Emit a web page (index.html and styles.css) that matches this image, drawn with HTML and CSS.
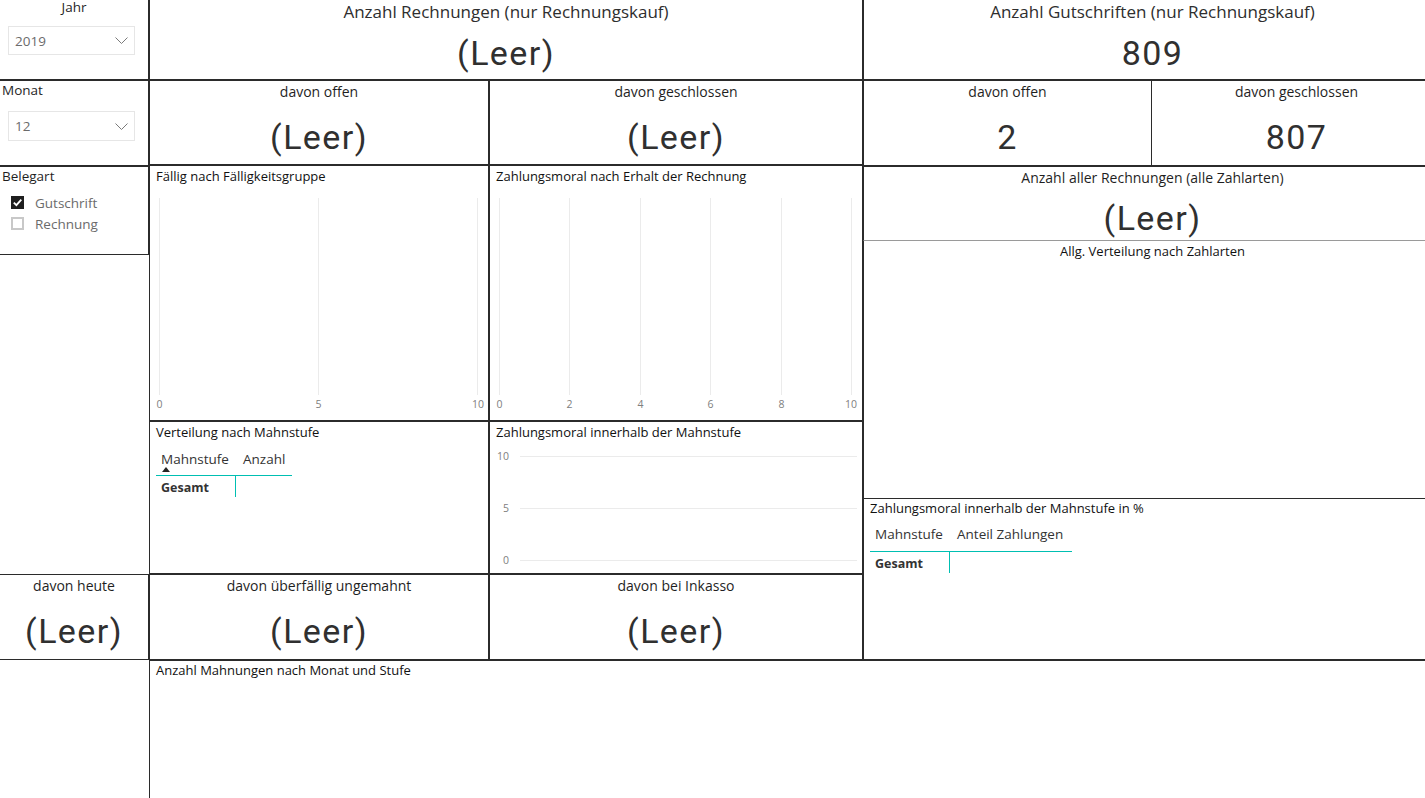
FILE: index.html
```html
<!DOCTYPE html>
<html lang="de">
<head>
<meta charset="utf-8">
<title>Bericht</title>
<link rel="stylesheet" href="styles.css">
</head>
<body>
<div class="report">
  <div class="col-left">
    <div class="slicer slicer-jahr">
      <div class="slicer-head slicer-head-center">Jahr</div>
      <div class="dropdown dropdown-jahr">
        <span>2019</span>
        <svg class="chevron" width="13" height="7" viewBox="0 0 13 7"><polyline points="0.5,0.5 6.5,6.5 12.5,0.5" fill="none" stroke="#7a7a7a" stroke-width="1"/></svg>
      </div>
    </div>
    <div class="slicer slicer-monat">
      <div class="slicer-head">Monat</div>
      <div class="dropdown dropdown-monat">
        <span>12</span>
        <svg class="chevron" width="13" height="7" viewBox="0 0 13 7"><polyline points="0.5,0.5 6.5,6.5 12.5,0.5" fill="none" stroke="#7a7a7a" stroke-width="1"/></svg>
      </div>
    </div>
    <div class="slicer slicer-beleg">
      <div class="slicer-head">Belegart</div>
      <div class="check-list">
        <div class="check-item">
          <svg class="checkbox" width="13" height="13" viewBox="0 0 13 13"><rect x="0" y="0" width="13" height="13" fill="#1f1f1f"/><polyline points="2.8,6.6 5.4,9.2 10.3,3.6" fill="none" stroke="#fff" stroke-width="1.8"/></svg>
          <span>Gutschrift</span>
        </div>
        <div class="check-item">
          <svg class="checkbox" width="13" height="13" viewBox="0 0 13 13"><rect x="1" y="1" width="11" height="11" fill="#fff" stroke="#c8c8c8" stroke-width="2"/></svg>
          <span>Rechnung</span>
        </div>
      </div>
    </div>
    <div class="left-spacer"></div>
    <div class="card card-left">
      <div class="card-title">davon heute</div>
      <div class="card-value">(Leer)</div>
    </div>
  </div>

  <div class="col-mid">
    <div class="card card-top mid-top">
      <div class="card-title card-title-big">Anzahl Rechnungen (nur Rechnungskauf)</div>
      <div class="card-value card-value-top">(Leer)</div>
    </div>
    <div class="card box">
      <div class="card-title">davon offen</div>
      <div class="card-value">(Leer)</div>
    </div>
    <div class="card box">
      <div class="card-title">davon geschlossen</div>
      <div class="card-value">(Leer)</div>
    </div>
    <div class="viz box">
      <div class="viz-title">Fällig nach Fälligkeitsgruppe</div>
      <svg class="plot" width="337" height="234" viewBox="0 0 337 234">
        <g stroke="#ebebeb" stroke-width="1">
          <line x1="9.5" y1="12" x2="9.5" y2="209"/>
          <line x1="168.5" y1="12" x2="168.5" y2="209"/>
          <line x1="327.5" y1="12" x2="327.5" y2="209"/>
        </g>
        <g class="axis" text-anchor="middle">
          <text x="9.5" y="222">0</text>
          <text x="168.5" y="222">5</text>
          <text x="328" y="222">10</text>
        </g>
      </svg>
    </div>
    <div class="viz box">
      <div class="viz-title">Zahlungsmoral nach Erhalt der Rechnung</div>
      <svg class="plot" width="372" height="234" viewBox="0 0 372 234">
        <g stroke="#ebebeb" stroke-width="1">
          <line x1="9.5" y1="12" x2="9.5" y2="209"/>
          <line x1="79.5" y1="12" x2="79.5" y2="209"/>
          <line x1="150.5" y1="12" x2="150.5" y2="209"/>
          <line x1="220.5" y1="12" x2="220.5" y2="209"/>
          <line x1="291.5" y1="12" x2="291.5" y2="209"/>
          <line x1="361.5" y1="12" x2="361.5" y2="209"/>
        </g>
        <g class="axis" text-anchor="middle">
          <text x="9.5" y="222">0</text>
          <text x="79.5" y="222">2</text>
          <text x="150.5" y="222">4</text>
          <text x="220.5" y="222">6</text>
          <text x="291.5" y="222">8</text>
          <text x="361" y="222">10</text>
        </g>
      </svg>
    </div>
    <div class="viz box">
      <div class="viz-title">Verteilung nach Mahnstufe</div>
      <div class="matrix matrix-small">
        <div class="matrix-head">
          <div class="mcell mcell-first">
            <span>Mahnstufe</span>
            <span class="sort-arrow"></span>
          </div>
          <div class="mcell mcell-second"><span>Anzahl</span></div>
        </div>
        <div class="matrix-total">
          <div class="tcell tcell-first">Gesamt</div>
          <div class="tcell"></div>
        </div>
      </div>
    </div>
    <div class="viz box">
      <div class="viz-title">Zahlungsmoral innerhalb der Mahnstufe</div>
      <svg class="plot" width="372" height="131" viewBox="0 0 372 131">
        <g stroke="#ebebeb" stroke-width="1">
          <line x1="30" y1="14.5" x2="367" y2="14.5"/>
          <line x1="30" y1="66.5" x2="367" y2="66.5"/>
          <line x1="30" y1="118.5" x2="367" y2="118.5"/>
        </g>
        <g class="axis" text-anchor="end">
          <text x="19" y="18">10</text>
          <text x="19" y="70">5</text>
          <text x="19" y="122">0</text>
        </g>
      </svg>
    </div>
    <div class="card box">
      <div class="card-title">davon überfällig ungemahnt</div>
      <div class="card-value">(Leer)</div>
    </div>
    <div class="card box">
      <div class="card-title">davon bei Inkasso</div>
      <div class="card-value">(Leer)</div>
    </div>
  </div>

  <div class="col-right">
    <div class="card card-top r-top">
      <div class="card-title card-title-big">Anzahl Gutschriften (nur Rechnungskauf)</div>
      <div class="card-value card-value-top">809</div>
    </div>
    <div class="r-row">
      <div class="card r-offen">
        <div class="card-title">davon offen</div>
        <div class="card-value">2</div>
      </div>
      <div class="card r-geschl">
        <div class="card-title">davon geschlossen</div>
        <div class="card-value">807</div>
      </div>
    </div>
    <div class="card r-aller">
      <div class="card-title">Anzahl aller Rechnungen (alle Zahlarten)</div>
      <div class="card-value card-value-short">(Leer)</div>
    </div>
    <div class="r-allg">
      <div class="viz-title viz-title-center">Allg. Verteilung nach Zahlarten</div>
    </div>
    <div class="viz r-zm">
      <div class="viz-title viz-title-up">Zahlungsmoral innerhalb der Mahnstufe in %</div>
      <div class="matrix matrix-wide">
        <div class="matrix-head">
          <div class="mcell mcell-first"><span>Mahnstufe</span></div>
          <div class="mcell mcell-second"><span>Anteil Zahlungen</span></div>
        </div>
        <div class="matrix-total">
          <div class="tcell tcell-first">Gesamt</div>
          <div class="tcell"></div>
        </div>
      </div>
    </div>
  </div>

  <div class="mahnungen">
    <div class="viz-title viz-title-bottom">Anzahl Mahnungen nach Monat und Stufe</div>
  </div>
</div>
</body>
</html>
```

FILE: styles.css
```css
* {
  box-sizing: border-box;
  margin: 0;
  padding: 0;
}

html, body {
  width: 1425px;
  height: 798px;
  overflow: hidden;
  background: #ffffff;
}

body {
  font-family: "Open Sans", "Noto Sans", "DejaVu Sans", sans-serif;
  color: #252423;
}

/* the right-hand visuals run a little past the window edge */
.report {
  display: grid;
  grid-template-columns: 149px 714px 578px;
  grid-template-rows: 660px 138px;
  width: 1441px;
  height: 798px;
}

/* ---------- left column (slicers) ---------- */
.col-left {
  grid-column: 1;
  grid-row: 1;
  display: flex;
  flex-direction: column;
}

.slicer {
  border-right: 1px solid #2b2b2b;
  border-bottom: 1px solid #2b2b2b;
}

.slicer-jahr { height: 80px; }

.slicer-monat {
  height: 86px;
  border-top: 1px solid #2b2b2b;
}

.slicer-beleg {
  height: 89px;
  border-top: 1px solid #2b2b2b;
}

.slicer-head {
  font-size: 13.5px;
  line-height: 18px;
  padding-left: 2px;
  color: #1f1f1f;
}

.slicer-head-center {
  text-align: center;
  padding-left: 0;
  line-height: 14px;
  height: 14px;
}

.dropdown {
  display: flex;
  align-items: center;
  justify-content: space-between;
  margin-left: 8px;
  width: 127px;
  border: 1px solid #e6e6e6;
  padding: 0 6px 0 6px;
  font-size: 13.5px;
  color: #6b6b6b;
}

.dropdown-jahr {
  margin-top: 12px;
  height: 29px;
}

.dropdown-monat {
  margin-top: 12px;
  height: 30px;
}

.chevron { display: block; }

.check-list {
  margin-top: 7px;
  padding-left: 11px;
  display: flex;
  flex-direction: column;
}

.check-item {
  display: flex;
  align-items: center;
  gap: 11px;
  height: 21px;
  font-size: 13.5px;
  color: #6b6b6b;
}

.checkbox { display: block; flex: none; }

.left-spacer { flex: 1; }

.card-left {
  height: 86px;
  border: 1px solid #2b2b2b;
  border-left: none;
}

/* ---------- cards ---------- */
.card {
  display: flex;
  flex-direction: column;
  align-items: center;
  overflow: hidden;
}

.card-title {
  margin-top: 2px;
  font-size: 14px;
  line-height: 18px;
  color: #1f1f1f;
  white-space: nowrap;
}

.card-title-big {
  margin-top: 0;
  font-size: 17px;
  line-height: 23px;
  height: 23px;
  color: #2e2e2e;
}

.card-value {
  margin-top: 16px;
  font-family: Roboto, "Open Sans", sans-serif;
  font-size: 34px;
  line-height: 40px;
  letter-spacing: 1.4px;
  color: #303030;
  white-space: nowrap;
}

.card-value-top { margin-top: 10px; }

.card-value-short { margin-top: 11px; }

.box { border: 1px solid #2b2b2b; }

/* ---------- middle column ---------- */
.col-mid {
  grid-column: 2;
  grid-row: 1;
  display: grid;
  grid-template-columns: 340px 374px;
  grid-template-rows: 80px 85px 256px 153px 86px;
}

.mid-top {
  grid-column: 1 / 3;
  border-left: 1px solid #2b2b2b;
  border-right: 1px solid #2b2b2b;
  border-bottom: 1px solid #2b2b2b;
}

.viz {
  overflow: hidden;
}

.viz-title {
  font-size: 13px;
  line-height: 20px;
  height: 20px;
  padding-left: 6px;
  color: #111111;
  white-space: nowrap;
}

.viz-title-up {
  line-height: 18px;
  height: 18px;
}

.viz-title-center {
  text-align: center;
  padding-left: 0;
}

.plot {
  display: block;
}

.axis text {
  font-family: "Open Sans", "Noto Sans", sans-serif;
  font-size: 10.5px;
  fill: #808080;
}

/* matrix / table visuals */
.matrix {
  margin-left: 6px;
  display: flex;
  flex-direction: column;
}

.matrix-small { width: 136px; }
.matrix-wide { width: 202px; }

.matrix-head {
  display: flex;
  height: 34px;
  border-bottom: 1px solid #00bfb2;
  font-size: 13.5px;
  color: #333333;
}

.matrix-wide .matrix-head {
  height: 35px;
}

.mcell {
  display: flex;
  flex-direction: column;
  padding-top: 8px;
  line-height: 18px;
  white-space: nowrap;
}

.mcell-first {
  width: 80px;
  padding-left: 5px;
}

.mcell-second {
  padding-left: 7px;
}

.sort-arrow {
  width: 0;
  height: 0;
  margin-top: -1px;
  margin-left: 1px;
  border-left: 4px solid transparent;
  border-right: 4px solid transparent;
  border-bottom: 5px solid #252423;
}

.matrix-total {
  display: flex;
  height: 21px;
}

.tcell {
  padding-top: 3px;
  line-height: 18px;
  font-size: 12.5px;
  font-weight: 700;
  color: #333333;
}

.tcell-first {
  width: 80px;
  padding-left: 5px;
  border-right: 1px solid #00bfb2;
}

/* ---------- right column ---------- */
.col-right {
  grid-column: 3;
  grid-row: 1;
  display: flex;
  flex-direction: column;
}

.r-top {
  height: 80px;
  border-left: 1px solid #2b2b2b;
  border-bottom: 1px solid #2b2b2b;
}

.r-row {
  height: 86px;
  display: flex;
}

.r-offen {
  width: 289px;
  border: 1px solid #2b2b2b;
}

.r-geschl {
  flex: 1;
  border-top: 1px solid #2b2b2b;
  border-bottom: 1px solid #2b2b2b;
}

.r-aller {
  height: 75px;
  border-left: 1px solid #2b2b2b;
  border-top: 1px solid #2b2b2b;
  border-bottom: 1px solid #9a9a9a;
}

.r-allg {
  height: 257px;
  border-left: 1px solid #2b2b2b;
}

.r-zm {
  height: 162px;
  border-left: 1px solid #2b2b2b;
  border-top: 1px solid #2b2b2b;
  border-bottom: 1px solid #2b2b2b;
}

/* ---------- bottom ---------- */
.mahnungen {
  grid-column: 2 / 4;
  grid-row: 2;
  border-left: 1px solid #2b2b2b;
  border-top: 1px solid #2b2b2b;
}

.viz-title-bottom {
  line-height: 18px;
  height: 18px;
}
```
